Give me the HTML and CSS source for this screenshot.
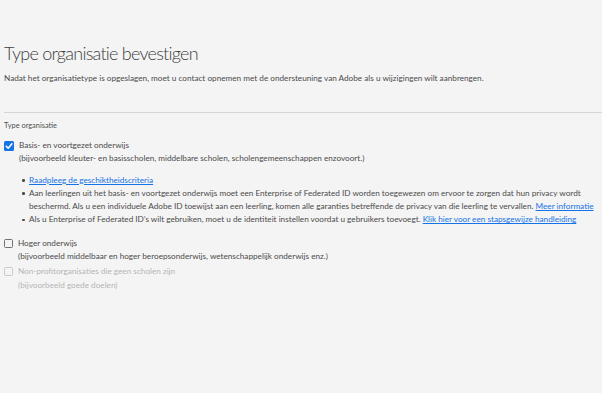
FILE: index.html
```html
<!DOCTYPE html>
<html lang="nl">
<head>
<meta charset="utf-8">
<link rel="stylesheet" href="styles.css">
</head>
<body>
<main class="page">
  <h1 class="title">Type organisatie bevestigen</h1>
  <p class="intro">Nadat het organisatietype is opgeslagen, moet u contact opnemen met de ondersteuning van Adobe als u wijzigingen wilt aanbrengen.</p>
  <hr class="divider">
  <div class="group-label">Type organisatie</div>

  <div class="option">
    <span class="box checked"><svg viewBox="0 0 10 10" width="10" height="10"><path d="M2.2 5.2 L4.2 7.2 L7.9 2.8" fill="none" stroke="#fff" stroke-width="1.6" stroke-linecap="round" stroke-linejoin="round"/></svg></span>
    <div class="option-text">
      <div class="opt-title">Basis- en voortgezet onderwijs</div>
      <div class="opt-sub">(bijvoorbeeld kleuter- en basisscholen, middelbare scholen, scholengemeenschappen enzovoort.)</div>
      <ul class="notes">
        <li><a href="#">Raadpleeg de geschiktheidscriteria</a></li>
        <li>Aan leerlingen uit het basis- en voortgezet onderwijs moet een Enterprise of Federated ID worden toegewezen om ervoor te zorgen dat hun privacy wordt beschermd. Als u een individuele Adobe ID toewijst aan een leerling, komen alle garanties betreffende de privacy van die leerling te vervallen. <a href="#">Meer informatie</a></li>
        <li>Als u Enterprise of Federated ID’s wilt gebruiken, moet u de identiteit instellen voordat u gebruikers toevoegt. <a href="#">Klik hier voor een stapsgewijze handleiding</a></li>
      </ul>
    </div>
  </div>

  <div class="option second">
    <span class="box"></span>
    <div class="option-text">
      <div class="opt-title">Hoger onderwijs</div>
      <div class="opt-sub">(bijvoorbeeld middelbaar en hoger beroepsonderwijs, wetenschappelijk onderwijs enz.)</div>
    </div>
  </div>

  <div class="option disabled">
    <span class="box"></span>
    <div class="option-text">
      <div class="opt-title">Non-profitorganisaties die geen scholen zijn</div>
      <div class="opt-sub">(bijvoorbeeld goede doelen)</div>
    </div>
  </div>
</main>
</body>
</html>
```

FILE: styles.css
```css
html, body {
  margin: 0;
  padding: 0;
  background: #f4f4f4;
}
body {
  font-family: "Lato", "Open Sans", sans-serif;
  color: #4b4b4b;
  width: 602px;
  height: 393px;
  overflow: hidden;
}
.page {
  padding: 40px 0 0 4px;
}
.title {
  margin: 0;
  font-size: 18px;
  font-weight: 300;
  letter-spacing: -0.75px;
  line-height: 26px;
  color: #3e3e3e;
}
.intro {
  margin: 6px 0 0;
  font-size: 8.2px;
  line-height: 12px;
}
.divider {
  margin: 28px 0 0;
  border: 0;
  border-top: 1px solid #d6d6d6;
  height: 0;
}
.group-label {
  margin-top: 8px;
  font-size: 7.4px;
  line-height: 10px;
  color: #505050;
}
.option {
  display: flex;
  gap: 5px;
  margin-top: 8px;
  font-size: 8.2px;
  line-height: 13.3px;
}
.option.second {
  margin-top: 10px;
}
.option.disabled {
  margin-top: 2px;
  color: #b4b4b4;
}
.box {
  flex: none;
  width: 9px;
  height: 9px;
  margin-top: 2px;
  border: 1px solid #707070;
  border-radius: 1.5px;
  box-sizing: border-box;
  display: flex;
}
.box.checked {
  width: 10px;
  height: 10px;
  border: 0;
  background: #1473e6;
}
.box svg {
  display: block;
}
.option.disabled .box {
  border-color: #cacaca;
}
.notes {
  margin: 8px 0 0;
  padding: 0 0 0 10px;
  list-style: none;
}
.notes li {
  position: relative;
}
.notes li::before {
  content: "";
  position: absolute;
  left: -7px;
  top: 5.5px;
  width: 2.5px;
  height: 2.5px;
  border-radius: 50%;
  background: #4b4b4b;
}
.notes a {
  color: #1473e6;
  text-decoration: underline;
}
```
